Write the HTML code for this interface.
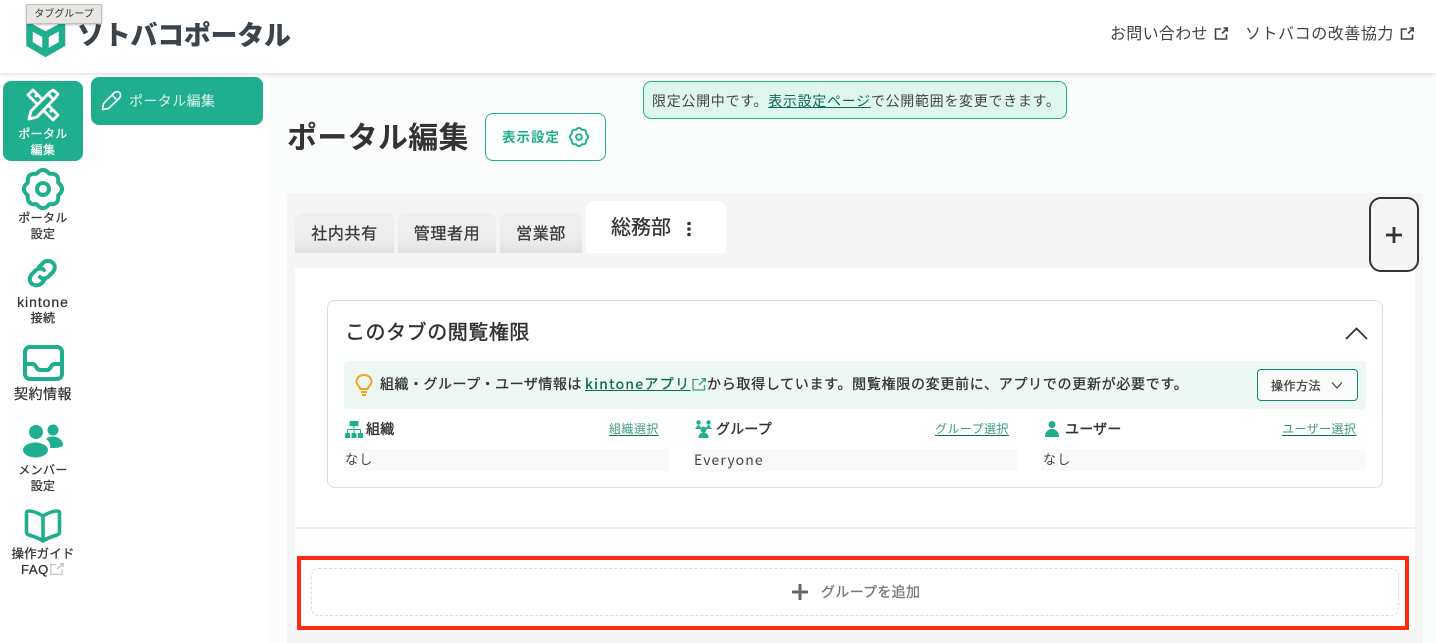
<!DOCTYPE html>
<html lang="ja"><head><meta charset="utf-8"><title>ポータル編集</title>
<style>
*{box-sizing:border-box}
html,body{margin:0;padding:0;width:1436px;height:643px;overflow:hidden;background:#fff;font-family:"Liberation Sans","Noto Sans CJK JP",sans-serif;color:#333}
.b{position:absolute}
.t{position:absolute;white-space:nowrap;line-height:20px;height:20px}
.m{-webkit-text-stroke:.3px currentColor}
.n{font-family:"Noto Sans CJK JP",sans-serif}
.c{text-align:center;width:80px;left:3px;font-size:12px;letter-spacing:.4px;-webkit-text-stroke:.25px currentColor}
svg{position:absolute;overflow:visible}
.lnk{font-size:12px;color:#3f9a85;letter-spacing:.45px;text-decoration:underline;text-decoration-color:#0b6b55;text-underline-offset:2px}
.h{font-size:14px;letter-spacing:.2px;color:#333;-webkit-text-stroke:.4px currentColor}
.row{position:absolute;top:449px;height:22px;background:#f9f9f9}
.v{font-size:13px;letter-spacing:1.2px;color:#444;top:450px}
.tab{position:absolute;top:213px;height:40px;border-radius:8px 8px 0 0;background:linear-gradient(#efefef,#eee 60%,#e1e1e1);text-align:center;font-size:16px;line-height:44px;letter-spacing:.6px;color:#3a3a3a;-webkit-text-stroke:.3px currentColor}
</style></head><body>
<div class="b" style="left:267px;top:73px;width:1169px;height:570px;background:#fbfdfc"></div>
<div class="b" style="left:0;top:0;width:1436px;height:73px;background:#fff;box-shadow:0 1px 5px rgba(0,0,0,.16)"></div>

<svg style="left:0;top:0" width="70" height="60" viewBox="0 0 70 60" fill="none" stroke="#1fae8e" stroke-width="6.500"><path d="M29.500 24V44L45.500 53.500L62 44V24"/><path d="M29 26L45.500 35L62 26M45.500 35V53"/></svg>
<div class="t" style="left:77px;top:21px;height:30px;line-height:30px;font-size:27px;font-weight:900;color:#3c444b;letter-spacing:-.3px">ソトバコポータル</div>
<div class="b" style="left:26px;top:4px;width:76px;height:20px;background:#e8e6e3;border:1px solid #c2c0bd;box-shadow:0 1px 2px rgba(0,0,0,.25);font-size:10px;line-height:20px;text-align:center;color:#333;border-radius:1px">タブグループ</div>

<div class="t" style="left:1110px;top:25px;font-size:16px;letter-spacing:.3px;color:#444">お問い合わせ</div>
<svg style="left:1214px;top:27px" width="14" height="14" viewBox="0 0 14 14" fill="none" stroke="#444" stroke-width="1.600"><path d="M7 2H1.500V12H12.500V7.500M8 6.500L13 1.500M9.500 1H13.200V4.700"/></svg>
<div class="t" style="left:1245px;top:25px;font-size:16px;letter-spacing:.55px;color:#444">ソトバコの改善協力</div>
<svg style="left:1400px;top:27px" width="14" height="14" viewBox="0 0 14 14" fill="none" stroke="#444" stroke-width="1.600"><path d="M7 2H1.500V12H12.500V7.500M8 6.500L13 1.500M9.500 1H13.200V4.700"/></svg>

<!-- sidebar -->
<div class="b" style="left:3px;top:81px;width:80px;height:80px;background:#1fae8e;border-radius:8px"></div>
<svg style="left:26px;top:88px" width="34" height="34" viewBox="0 0 34 34" fill="none" stroke="#fff" stroke-width="2.800" stroke-linejoin="round"><path d="M2 7L7 2L32 27L27 32Z"/><path d="M9 9L12 6M14 14L17 11M19 19L22 16M24 24L27 21"/><path d="M3 31L5 23L24 4L27 2L32 6L30 9L11 29Z" fill="#1fae8e"/><path d="M22 6L28 12"/></svg>
<div class="t c" style="top:124px;color:#fff">ポータル</div>
<div class="t c" style="top:140px;color:#fff">編集</div>

<svg style="left:22px;top:169px" width="42" height="40" viewBox="0 0 42 40" fill="none" stroke="#1fae8e" stroke-width="4" stroke-linejoin="round"><path d="M14.700 4.800Q21 -3 27.300 4.800Q37.300 3.700 36.200 13.700Q44 20 36.200 26.300Q37.300 36.300 27.300 35.200Q21 43 14.700 35.200Q4.700 36.300 5.800 26.300Q-2 20 5.800 13.700Q4.700 3.700 14.700 4.800Z"/><circle cx="21" cy="20" r="6"/></svg>
<div class="t c" style="top:208px">ポータル</div>
<div class="t c" style="top:224px">設定</div>

<svg style="left:27px;top:258px" width="30" height="30" viewBox="0 0 30 30" fill="none" stroke="#1fae8e" stroke-width="4" stroke-linecap="round"><path d="M12 9L15 6C18 2 23 2 26 5C29 8 28 12 25 15L21 19C18 21 15 21 13 19"/><path d="M17 12C15 10 12 10 9 12L5 16C2 19 2 23 5 26C8 28 12 28 15 25L18 21"/></svg>
<div class="t c" style="top:292px;font-size:14px;letter-spacing:.95px">kintone</div>
<div class="t c" style="top:308px">接続</div>

<svg style="left:23px;top:345px" width="41" height="36" viewBox="0 0 41 36" fill="none" stroke="#1fae8e" stroke-width="4"><rect x="2" y="2" width="37" height="32" rx="5"/><path d="M2 19H10C13 19 13 25 17 25H24C28 25 28 19 31 19H39"/></svg>
<div class="t c" style="top:384px;font-size:14px;letter-spacing:.5px">契約情報</div>

<svg style="left:22px;top:424px" width="42" height="34" viewBox="0 0 42 34" fill="#1fae8e"><circle cx="14" cy="8" r="7"/><circle cx="31" cy="6" r="5.500"/><path d="M24 15C26 13 28 12.500 31 12.500C36 12.500 41 16 41 21C41 23 36 24 30 24L28 24C29 20 27 17 24 15Z"/><ellipse cx="13.500" cy="26" rx="12.500" ry="7.500"/></svg>
<div class="t c" style="top:460px">メンバー</div>
<div class="t c" style="top:476px">設定</div>

<svg style="left:24px;top:509px" width="38" height="34" viewBox="0 0 38 34" fill="none" stroke="#1fae8e" stroke-width="3.600" stroke-linejoin="round"><path d="M19 7C14 4 9 2 5 2C3 2 2.500 3 2.500 4V23C2.500 25 3.500 25.500 5 26C10 27.500 15 29 19 32C23 29 28 27.500 33 26C34.500 25.500 35.500 25 35.500 23V4C35.500 3 35 2 33 2C29 2 24 4 19 7V32"/></svg>
<div class="t c" style="top:544px;font-size:12.500px;letter-spacing:.1px">操作ガイド</div>
<div class="t m" style="left:21px;top:560px;font-size:13px;letter-spacing:.6px">FAQ</div>
<svg style="left:50px;top:563px" width="14" height="12" viewBox="0 0 14 12" fill="none" stroke="#c0c0c0" stroke-width="1.200"><path d="M6 1.500H.8V11.300H12V6.500M7 6L13 .8M9.500 .6H13.200V4"/></svg>

<div class="b" style="left:91px;top:77px;width:172px;height:48px;background:#1fae8e;border-radius:8px"></div>
<svg style="left:101px;top:90px" width="21" height="21" viewBox="0 0 21 21" fill="none" stroke="#fff" stroke-width="1.600" stroke-linejoin="round"><path d="M1.500 19.500L2.500 13.500L13 3C15 1 18 1.500 19 3C20 5 19.500 7 18 8.500L7.500 18.500Z"/><path d="M11 5L16 10"/></svg>
<div class="t" style="left:129px;top:91px;font-size:14px;letter-spacing:.4px;color:#dcf3ec">ポータル編集</div>

<!-- title -->
<div class="t" style="left:287px;top:120px;height:38px;line-height:38px;font-size:30px;font-weight:700;color:#333;letter-spacing:.3px">ポータル編集</div>
<div class="b" style="left:485px;top:113px;width:121px;height:48px;border:1px solid #1fae8e;border-radius:8px;background:#fcfefd"></div>
<div class="t" style="left:502px;top:128px;font-size:13.500px;font-weight:700;color:#1fae8e;letter-spacing:1px">表示設定</div>
<svg style="left:569px;top:127px" width="20" height="20" viewBox="0 0 42 40" fill="none" stroke="#1fae8e" stroke-width="4" stroke-linejoin="round"><path d="M14.700 4.800Q21 -3 27.300 4.800Q37.300 3.700 36.200 13.700Q44 20 36.200 26.300Q37.300 36.300 27.300 35.200Q21 43 14.700 35.200Q4.700 36.300 5.800 26.300Q-2 20 5.800 13.700Q4.700 3.700 14.700 4.800Z"/><circle cx="21" cy="20" r="6"/></svg>

<div class="b" style="left:643px;top:81px;width:424px;height:38px;background:#dff6ee;border:1px solid #1fae8e;border-radius:8px"></div>
<div class="t" style="left:652px;top:91px;font-size:14px;letter-spacing:.7px;color:#444">限定公開中です。<span style="color:#0b6b55;text-decoration:underline">表示設定ページ</span>で公開範囲を変更できます。</div>

<!-- panel -->
<div class="b" style="left:287px;top:193px;width:1136px;height:450px;background:#f5f5f5"></div>
<div class="b" style="left:295px;top:268px;width:1120px;height:364px;background:#fff;border-radius:0 0 6px 6px"></div>
<div class="tab" style="left:295px;width:99px">社内共有</div>
<div class="tab" style="left:398px;width:98px">管理者用</div>
<div class="tab" style="left:500px;width:82px">営業部</div>
<div class="b" style="left:586px;top:201px;width:140px;height:52px;background:#fff;border-radius:8px 8px 0 0"></div>
<div class="t m" style="left:611px;top:218px;font-size:20px;color:#333">総務部</div>
<svg style="left:686px;top:221px" width="6" height="16" viewBox="0 0 6 16" fill="#333"><circle cx="3" cy="2.500" r="1.800"/><circle cx="3" cy="8" r="1.800"/><circle cx="3" cy="13.500" r="1.800"/></svg>
<div class="b" style="left:1369px;top:197px;width:50px;height:75px;border:2px solid #333;border-radius:12px;background:#f5f5f5"></div>
<svg style="left:1386px;top:227px" width="16" height="16" viewBox="0 0 16 16" stroke="#333" stroke-width="2.800"><path d="M0 8H16M8 0V16"/></svg>

<!-- card -->
<div class="b" style="left:327px;top:300px;width:1056px;height:188px;border:1px solid #ddd;border-radius:8px;background:#fff"></div>
<div class="t m" style="left:345px;top:323px;font-size:20px;letter-spacing:.55px;color:#333;-webkit-text-stroke:.45px currentColor">このタブの閲覧権限</div>
<svg style="left:1345px;top:327px" width="23" height="13" viewBox="0 0 23 13" fill="none" stroke="#333" stroke-width="1.800"><path d="M1 12L11.500 1.500L22 12"/></svg>

<div class="b" style="left:344px;top:361px;width:1022px;height:48px;background:#edf7f4;border-radius:4px"></div>
<svg style="left:355px;top:374px" width="18" height="23" viewBox="0 0 18 23" fill="none" stroke="#f9a01e" stroke-width="2"><path d="M5.500 15C5 12.500 1.500 11 1.500 7.500C1.500 3.500 5 1 9 1C13 1 16.500 3.500 16.500 7.500C16.500 11 13 12.500 12.500 15Z"/><path d="M6 18H12M7 21H11"/></svg>
<div class="t m" style="left:380px;top:374px;font-size:14px;letter-spacing:.5px;color:#333">組織・グループ・ユーザ情報は</div>
<div class="t m n" style="left:585px;top:374px;font-size:14px;letter-spacing:1.350px;color:#0b6b55;text-decoration:underline">kintoneアプリ</div>
<svg style="left:692px;top:378px" width="14" height="13" viewBox="0 0 14 13" fill="none" stroke="#3f9a85" stroke-width="1.300"><path d="M6.500 1.500H1V12H12.500V7M7 7L13 1M9.500 .7H13.300V4.300"/></svg>
<div class="t m" style="left:707px;top:374px;font-size:14px;letter-spacing:.7px;color:#333">から取得しています。閲覧権限の変更前に、アプリでの更新が必要です。</div>
<div class="b" style="left:1257px;top:369px;width:101px;height:32px;background:#f9fcfb;border:1px solid #0e8a7a;border-radius:4px"></div>
<div class="t m" style="left:1271px;top:376px;font-size:12px;letter-spacing:.5px;color:#444">操作方法</div>
<svg style="left:1331px;top:381px" width="12" height="9" viewBox="0 0 12 9" fill="none" stroke="#444" stroke-width="1.200"><path d="M1 1.500L6 7L11 1.500"/></svg>

<svg style="left:345px;top:421px" width="18" height="17" viewBox="0 0 18 17" fill="#1fae8e"><rect x="4.500" y="0" width="9" height="5"/><rect x="0" y="12" width="5" height="5"/><rect x="6.500" y="12" width="5" height="5"/><rect x="13" y="12" width="5" height="5"/><path d="M8.500 5H9.500V8H16V12H15V9H9.500V12H8.500V9H3V12H2V8H8.500Z"/></svg>
<div class="t h" style="left:366px;top:419px">組織</div>
<div class="t lnk" style="left:609px;top:419px">組織選択</div>
<div class="row" style="left:344px;width:325px"></div>
<div class="t v" style="left:345px">なし</div>

<svg style="left:695px;top:420px" width="17" height="18" viewBox="0 0 17 18" fill="#1fae8e"><circle cx="3.500" cy="2.500" r="2.200"/><circle cx="13.500" cy="2.500" r="2.200"/><path d="M0 9L3.500 4.500L7 9Z"/><path d="M10 9L13.500 4.500L17 9Z"/><circle cx="8.500" cy="9.500" r="3"/><path d="M3.500 18C3.500 14.500 5.500 12.500 8.500 12.500C11.500 12.500 13.500 14.500 13.500 18Z"/></svg>
<div class="t h" style="left:716px;top:419px">グループ</div>
<div class="t lnk" style="left:935px;top:419px">グループ選択</div>
<div class="row" style="left:693px;width:324px"></div>
<div class="t v n" style="left:694px;font-size:14px;letter-spacing:1.100px">Everyone</div>

<svg style="left:1045px;top:421px" width="14" height="16" viewBox="0 0 14 16" fill="#1fae8e"><circle cx="7" cy="3.500" r="3.500"/><path d="M0 16C0 11 3 8 7 8C11 8 14 11 14 16Z"/></svg>
<div class="t h" style="left:1065px;top:419px">ユーザー</div>
<div class="t lnk" style="left:1282px;top:419px">ユーザー選択</div>
<div class="row" style="left:1041px;width:325px"></div>
<div class="t v" style="left:1043px">なし</div>

<div class="b" style="left:295px;top:527px;width:1120px;height:2px;background:#eee"></div>
<div class="b" style="left:311px;top:568px;width:1088px;height:48px;border:1px dashed #ddd;border-radius:8px"></div>
<svg style="left:792px;top:584px" width="16" height="16" viewBox="0 0 16 16" stroke="#666" stroke-width="3"><path d="M0 8H16M8 0V16"/></svg>
<div class="t m" style="left:821px;top:582px;font-size:14px;letter-spacing:.3px;color:#777">グループを追加</div>
<div class="b" style="left:297px;top:556px;width:1112px;height:74px;border:4px solid #ff2a10"></div>
</body></html>
